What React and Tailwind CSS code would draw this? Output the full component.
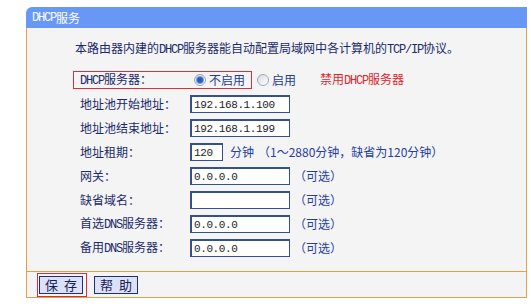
import React from "react";

const L = ({ children }) => (
  <span className="font-['Liberation_Mono',monospace] text-[12px] tracking-[-1.2px]">{children}</span>
);

const Radio = ({ checked }) => (
  <span className="relative inline-flex h-[12px] w-[12px] items-center justify-center rounded-full border border-[#9aa6b8] bg-gradient-to-br from-[#d8dce4] to-[#ffffff]">
    {checked && <span className="h-[6px] w-[6px] rounded-full bg-[#2a5fb8] shadow-[0_0_0_1px_#7fa3e0]" />}
  </span>
);

const Input = ({ value, w = "w-[100px]" }) => (
  <div className={`${w} h-[18px] border border-[#34508f] border-t-2 border-l-2 bg-white pl-[2px] flex items-center font-['Liberation_Mono',monospace] text-[11px] tracking-[-0.4px] text-[#222]`}>
    {value}
  </div>
);

const Row = ({ label, children }) => (
  <div className="flex h-[24px] items-center">
    <div className="w-[117px] pl-[7px] text-[#1b2a6b]">{label}</div>
    {children}
  </div>
);

const Opt = () => <span className="ml-[4px] text-[#2440a0]">（可选）</span>;

export default function App() {
  return (
    <div className="min-h-[306px] w-[531px] bg-white pt-[7px] pl-[26px] font-['Noto_Sans_CJK_SC',sans-serif] text-[12px] leading-[16px]">
      <div className="w-[501px]">
        <div className="flex h-[21px] items-center rounded-tl-[6px] bg-[#6898f6] pl-[6px] text-white">
          <L>DHCP</L>服务
        </div>
        <div className="h-[244px] border-x border-b border-[#e3a044] bg-[#f4f4f5] pt-[12px]">
          <div className="h-[16px] pl-[48px] text-[#1b2a6b]">
            本路由器内建的<L>DHCP</L>服务器能自动配置局域网中各计算机的<L>TCP/IP</L>协议。
          </div>
          <div className="mt-[12px] flex flex-col pl-[46px]">
            <div className="flex h-[24px] items-center">
              <div className="flex h-[18px] w-[179px] items-center border border-[#d8303a]">
                <div className="w-[116px] pl-[6px] text-[#1b2a6b]">
                  <L>DHCP</L>服务器：
                </div>
                <span className="ml-[4px] flex items-center"><Radio checked /></span>
                <span className="ml-[3px] text-[#1f3a93]">不启用</span>
              </div>
              <span className="ml-[5px] flex items-center"><Radio /></span>
              <span className="ml-[3px] text-[#1f3a93]">启用</span>
              <span className="ml-[24px] text-[#e0242c]">
                禁用<L>DHCP</L>服务器
              </span>
            </div>
            <Row label="地址池开始地址：">
              <Input value="192.168.1.100" />
            </Row>
            <Row label="地址池结束地址：">
              <Input value="192.168.1.199" />
            </Row>
            <Row label="地址租期：">
              <Input value="120" w="w-[33px]" />
              <span className="ml-[7px] text-[#2440a0]">分钟</span>
              <span className="ml-[4px] text-[#2440a0]">（1～2880分钟，缺省为120分钟）</span>
            </Row>
            <Row label="网关：">
              <Input value="0.0.0.0" />
              <Opt />
            </Row>
            <Row label="缺省域名：">
              <Input value="" />
              <Opt />
            </Row>
            <Row label={<><span>首选</span><L>DNS</L><span>服务器：</span></>}>
              <Input value="0.0.0.0" />
              <Opt />
            </Row>
            <Row label={<><span>备用</span><L>DNS</L><span>服务器：</span></>}>
              <Input value="0.0.0.0" />
              <Opt />
            </Row>
          </div>
        </div>
        <div className="flex h-[26px] items-start border-x border-b border-[#e3a044] bg-[#f4f4f6] pl-[10px] pt-[1px]">
          <div className="flex border border-[#d8303a] py-[2px] pl-[1px] pr-[3px]">
            <div className="flex h-[18px] w-[44px] items-center justify-center border border-[#1e3070] bg-[#dde1f8] text-[13px] text-[#14205a]">
              保&nbsp;&nbsp;存
            </div>
          </div>
          <div className="ml-[7px] mt-[3px] flex h-[18px] w-[44px] items-center justify-center border border-[#1e3070] bg-[#dde1f8] text-[13px] text-[#14205a]">
            帮&nbsp;&nbsp;助
          </div>
        </div>
      </div>
    </div>
  );
}
